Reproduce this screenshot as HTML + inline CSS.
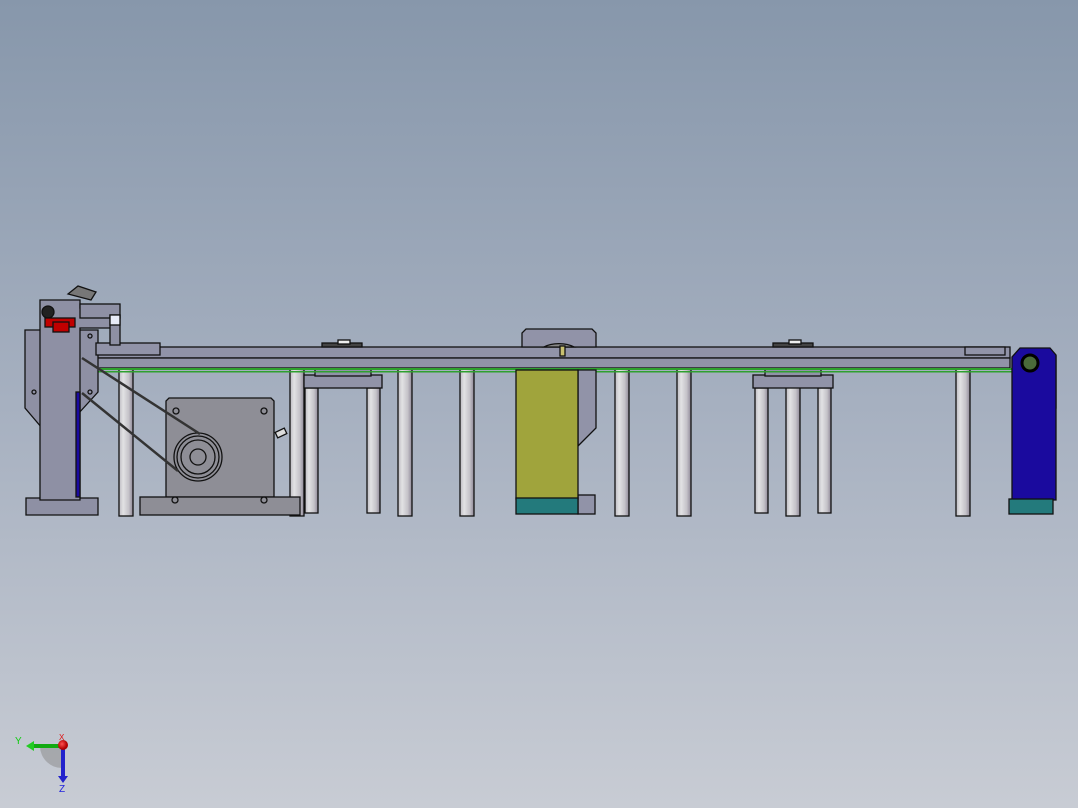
<!DOCTYPE html>
<html><head><style>
html,body{margin:0;padding:0;width:1078px;height:808px;overflow:hidden}
body{background:linear-gradient(#8797ab 0%,#a6b0c0 50%,#c8ccd4 100%)}
svg{position:absolute;left:0;top:0}
text{font-family:"Liberation Sans",sans-serif}
</style></head><body>
<svg width="1078" height="808" viewBox="0 0 1078 808">
<defs>
<linearGradient id="p" x1="0" x2="1"><stop offset="0" stop-color="#bdbbc2"/><stop offset=".3" stop-color="#e2e2e4"/><stop offset=".7" stop-color="#c4c2c8"/><stop offset="1" stop-color="#8f8898"/></linearGradient>
<radialGradient id="rb" cx=".4" cy=".4"><stop offset="0" stop-color="#ff5050"/><stop offset="1" stop-color="#b00000"/></radialGradient>
</defs>
<g stroke="#111" stroke-width="1.3">
<g fill="url(#p)">
<rect x="119" y="369" width="14" height="147"/>
<rect x="290" y="369" width="14" height="147"/>
<rect x="305" y="388" width="13" height="125"/>
<rect x="367" y="388" width="13" height="125"/>
<rect x="398" y="369" width="14" height="147"/>
<rect x="460" y="369" width="14" height="147"/>
<rect x="615" y="369" width="14" height="147"/>
<rect x="677" y="369" width="14" height="147"/>
<rect x="755" y="388" width="13" height="125"/>
<rect x="786" y="369" width="14" height="147"/>
<rect x="818" y="388" width="13" height="125"/>
<rect x="956" y="369" width="14" height="147"/>
</g>
<g fill="#9193a8">
<rect x="304" y="375" width="78" height="13"/><rect x="315" y="368" width="56" height="8"/>
<rect x="753" y="375" width="80" height="13"/><rect x="765" y="368" width="56" height="8"/>
</g>
<rect x="95" y="347" width="915" height="11" fill="#9193a8"/>
<rect x="95" y="358" width="915" height="10" fill="#9193a8"/>
<rect x="322" y="343" width="40" height="4" fill="#444"/><rect x="338" y="340" width="12" height="4" fill="#eee"/>
<rect x="773" y="343" width="40" height="4" fill="#444"/><rect x="789" y="340" width="12" height="4" fill="#eee"/>
<rect x="965" y="347" width="40" height="8" fill="#9193a8"/>
</g>
<rect x="80" y="368" width="932" height="2" fill="#2fa02f"/>
<rect x="80" y="371" width="932" height="1.5" fill="#2fa02f"/>
<g stroke="#111" stroke-width="1.3">
<path d="M522 347V333l4-4h66l4 4v14z" fill="#9193a8"/>
<path d="M544 347a20 10 0 0 1 30 0z" fill="#888"/>
<rect x="560" y="346" width="5" height="10" fill="#c8c070"/>
<path d="M578 370h18v58l-18 18z" fill="#9193a8"/>
<rect x="578" y="495" width="17" height="19" fill="#9193a8"/>
<rect x="516" y="370" width="62" height="129" fill="#a0a43c"/>
<rect x="516" y="498" width="62" height="16" fill="#237a7c"/>
<rect x="1050" y="356" width="6" height="52" fill="#9193a8"/>
<path d="M1012 500V357l8-9h30l6 7v145z" fill="#1a0a9e"/>
<rect x="1009" y="499" width="44" height="15" fill="#237a7c"/>
<circle cx="1030" cy="363" r="8" fill="#4a6a3a" stroke="#000" stroke-width="3"/>
<path d="M166 497V401l3-3h102l3 3v96z" fill="#8e8e96"/>
<rect x="140" y="497" width="160" height="18" fill="#8e8e96"/>
<circle cx="198" cy="457" r="24" fill="#8e8e96"/><circle cx="198" cy="457" r="21" fill="none"/><circle cx="198" cy="457" r="17" fill="none"/><circle cx="198" cy="457" r="8" fill="#8e8e96"/>
<g fill="none"><circle cx="176" cy="411" r="3"/><circle cx="264" cy="411" r="3"/><circle cx="175" cy="500" r="3"/><circle cx="264" cy="500" r="3"/></g>
<rect x="276" y="430" width="10" height="6" fill="#ddd" transform="rotate(-25 281 433)"/>
<path d="M25 330h17v98l-17-20z" fill="#8e90a4"/>
<path d="M78 330h20v62l-20 22z" fill="#8e90a4"/>
<path d="M26 498h72v17H26z" fill="#8e90a4"/>
<path d="M40 300h40v8h36v20H80v172H40z" fill="#8e90a4"/>
<rect x="76" y="392" width="4" height="105" fill="#1a0aa0"/>
<rect x="96" y="343" width="64" height="12" fill="#9193a8"/>
<rect x="80" y="304" width="40" height="14" fill="#8e90a4"/>
<rect x="110" y="315" width="10" height="30" fill="#8e90a4"/><rect x="110" y="315" width="10" height="10" fill="#e8ecf8"/>
<path d="M68 294l10-8 18 6-5 8z" fill="#777"/>
<circle cx="48" cy="312" r="6" fill="#222"/>
<rect x="45" y="318" width="30" height="9" fill="#c00000"/><rect x="53" y="322" width="16" height="10" fill="#c00000"/>
<g fill="none"><circle cx="34" cy="392" r="2"/><circle cx="90" cy="392" r="2"/><circle cx="90" cy="336" r="2"/></g>
</g>
<g stroke="#333" stroke-width="2.5" fill="none">
<path d="M82 358L200 434"/><path d="M82 393L178 471"/>
</g>
<path d="M40 746a22 22 0 0 0 22 22v-22z" fill="#888" opacity=".5"/>
<path d="M62 746h-32" stroke="#1a1" stroke-width="4"/><path d="M26 746l8-5v10z" fill="#2c2"/>
<path d="M63 746v30" stroke="#22c" stroke-width="4"/><path d="M58 776h10l-5 7z" fill="#22c"/>
<circle cx="63" cy="745" r="5" fill="url(#rb)"/>
<text x="15" y="744" font-size="10" fill="#1c1">Y</text>
<text x="59" y="740" font-size="8" fill="#d11">X</text>
<text x="59" y="792" font-size="10" fill="#22d">Z</text>
</svg>
</body></html>
